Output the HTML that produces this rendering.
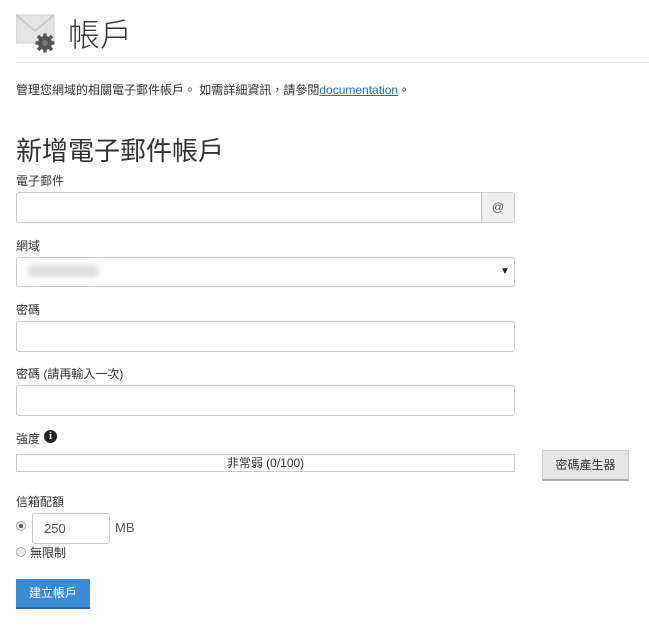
<!DOCTYPE html>
<html><head><meta charset="utf-8"><style>
*{box-sizing:border-box;margin:0;padding:0}
body{width:649px;height:627px;background:#fff;font-family:"Liberation Sans","Noto Sans CJK TC",sans-serif;color:#333;position:relative;overflow:hidden;font-size:12px}
.a{position:absolute;white-space:nowrap}
.inp{position:absolute;border:1px solid #ccc;border-radius:3px;background:#fff}
.lbl{font-size:12px;font-weight:normal;color:#333}
</style></head><body>
<svg class="a" style="left:16px;top:13px" width="46" height="42" viewBox="0 0 46 42">
<rect x="0" y="2" width="38" height="28" fill="#e4e4e4" stroke="#d0d0d0"/>
<path d="M0 2 L19 18 L38 2" fill="none" stroke="#c8c8c8" stroke-width="2"/>
<g transform="translate(29,30)" fill="#555">
<circle r="7"/>
<g stroke="#555" stroke-width="3.5"><line x1="0" y1="-9.5" x2="0" y2="9.5"/><line x1="-9.5" y1="0" x2="9.5" y2="0"/><line x1="-7" y1="-7" x2="7" y2="7"/><line x1="-7" y1="7" x2="7" y2="-7"/></g>
<circle r="3" fill="#777"/></g>
</svg>
<div class="a" style="left:68px;top:10px;font-size:32px;color:#333;font-weight:300">帳戶</div>
<div class="a" style="left:16px;top:62px;width:633px;border-top:1px solid #e8e8e8"></div>
<div class="a" style="left:16px;top:81px;font-size:12px">管理您網域的相關電子郵件帳戶。 如需詳細資訊，請參閱<span style="color:#2a6fb0;text-decoration:underline">documentation</span>。</div>
<div class="a" style="left:16px;top:131px;font-size:26px;color:#333">新增電子郵件帳戶</div>
<div class="a lbl" style="left:16px;top:172px">電子郵件</div>
<div class="inp" style="left:16px;top:192px;width:499px;height:31px"></div>
<div class="a" style="left:481px;top:193px;width:33px;height:29px;background:#eee;border-left:1px solid #ccc;text-align:center;line-height:29px;color:#666;font-size:12px">@</div>
<div class="a lbl" style="left:16px;top:237px">網域</div>
<div class="inp" style="left:16px;top:257px;width:499px;height:30px"></div>
<div class="a" style="left:28px;top:265px;width:70px;height:12px;background:#ddd;filter:blur(3px)"></div>
<div class="a" style="left:500px;top:266px;font-size:10px;color:#222">▼</div>
<div class="a lbl" style="left:16px;top:301px">密碼</div>
<div class="inp" style="left:16px;top:321px;width:499px;height:31px"></div>
<div class="a lbl" style="left:16px;top:365px">密碼 (請再輸入一次)</div>
<div class="inp" style="left:16px;top:385px;width:499px;height:31px"></div>
<div class="a lbl" style="left:16px;top:430px">強度</div>
<div class="a" style="left:44px;top:430px;width:13px;height:13px;border-radius:50%;background:#222;color:#fff;font-size:10px;font-weight:bold;text-align:center;line-height:13px;font-family:'Liberation Serif',serif">i</div>
<div class="a" style="left:16px;top:454px;width:499px;height:18px;border:1px solid #ccc;text-align:center;line-height:16px;font-size:12px">非常弱 (0/100)</div>
<div class="a" style="left:542px;top:450px;width:87px;height:31px;background:#e6e6e6;border:1px solid #ccc;border-bottom:2px solid #aaa;text-align:center;line-height:28px;font-size:12px">密碼產生器</div>
<div class="a lbl" style="left:16px;top:493px">信箱配額</div>
<div class="a" style="left:16px;top:521px;width:10px;height:10px;border-radius:50%;border:1px solid #aaa;background:#eee"><div style="width:4px;height:4px;border-radius:50%;background:#555;margin:2px"></div></div>
<div class="inp" style="left:32px;top:513px;width:78px;height:31px;line-height:29px;padding-left:11px;font-size:13px;color:#555">250</div>
<div class="a" style="left:115px;top:520px;font-size:13px;color:#555">MB</div>
<div class="a" style="left:16px;top:547px;width:10px;height:10px;border-radius:50%;border:1px solid #aaa;background:#eee"></div>
<div class="a" style="left:30px;top:544px;font-size:12px">無限制</div>
<div class="a" style="left:16px;top:579px;width:74px;height:30px;background:#3a8ad4;border-bottom:2px solid #2a6aa8;color:#fff;text-align:center;line-height:28px;font-size:12px">建立帳戶</div>
</body></html>
